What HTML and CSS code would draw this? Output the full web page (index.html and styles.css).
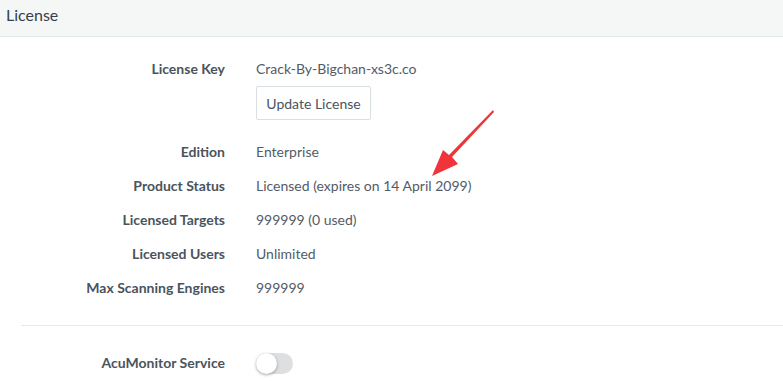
FILE: index.html
```html
<!DOCTYPE html>
<html lang="en">
<head>
  <meta charset="UTF-8">
  <meta name="viewport" content="width=device-width, initial-scale=1.0">
  <title>License</title>
  <link rel="stylesheet" href="styles.css">
</head>
<body>
  <div class="header">License</div>

  <div class="content">
    <div class="grid">
      <div class="label">License Key</div>
      <div class="value">
        <div class="line">Crack-By-Bigchan-xs3c.co</div>
        <button class="btn">Update License</button>
      </div>

      <div class="label">Edition</div>
      <div class="value line">Enterprise</div>

      <div class="label">Product Status</div>
      <div class="value line">Licensed (expires on 14 April 2099)</div>

      <div class="label">Licensed Targets</div>
      <div class="value line">999999 (0 used)</div>

      <div class="label">Licensed Users</div>
      <div class="value line">Unlimited</div>

      <div class="label">Max Scanning Engines</div>
      <div class="value line">999999</div>
    </div>

    <div class="divider"></div>

    <div class="grid">
      <div class="label">AcuMonitor Service</div>
      <div class="value line">
        <span class="toggle"><span class="knob"></span></span>
      </div>
    </div>
  </div>

  <svg class="arrow" width="80" height="80" viewBox="0 0 80 80">
    <path d="M71 8 L72 10 L30 55 L36 62 L10 74 L21 48 L27 53 Z" fill="#f0343a"/>
  </svg>
</body>
</html>
```

FILE: styles.css
```css
* {
  box-sizing: border-box;
}

body {
  margin: 0;
  background-color: #fff;
  font-family: "Lato", "Noto Sans", sans-serif;
  font-size: 14px;
  color: #525c66;
}

.header {
  height: 37px;
  padding-left: 6px;
  line-height: 30px;
  font-size: 16px;
  color: #34404b;
  background-color: #f5f7f7;
  border-bottom: 1px solid #e7eaea;
}

.content {
  padding-top: 15px;
}

.grid {
  display: grid;
  grid-template-columns: 225px 1fr;
  column-gap: 31px;
}

.label {
  height: 34px;
  line-height: 34px;
  text-align: right;
  font-weight: bold;
  color: #4a545e;
}

.line {
  height: 34px;
  line-height: 34px;
}

.btn {
  display: block;
  width: 115px;
  height: 34px;
  margin-bottom: 15px;
  padding: 0;
  font-family: inherit;
  font-size: 14px;
  color: #4a545e;
  background-color: #fff;
  border: 1px solid #d8dfe2;
  border-radius: 2px;
}

.divider {
  margin: 20px 0 20px 21px;
  border-top: 1px solid #e6e9ea;
}

.toggle {
  display: inline-block;
  position: relative;
  width: 37px;
  height: 21px;
  margin-top: 7px;
  vertical-align: top;
  background-color: #dedfe0;
  border-radius: 11px;
}

.knob {
  position: absolute;
  left: 0;
  top: 0;
  width: 21px;
  height: 21px;
  background-color: #fff;
  border-radius: 50%;
  box-shadow: 0 1px 3px rgba(0, 0, 0, 0.35);
}

.arrow {
  position: absolute;
  left: 422px;
  top: 102px;
}
```
